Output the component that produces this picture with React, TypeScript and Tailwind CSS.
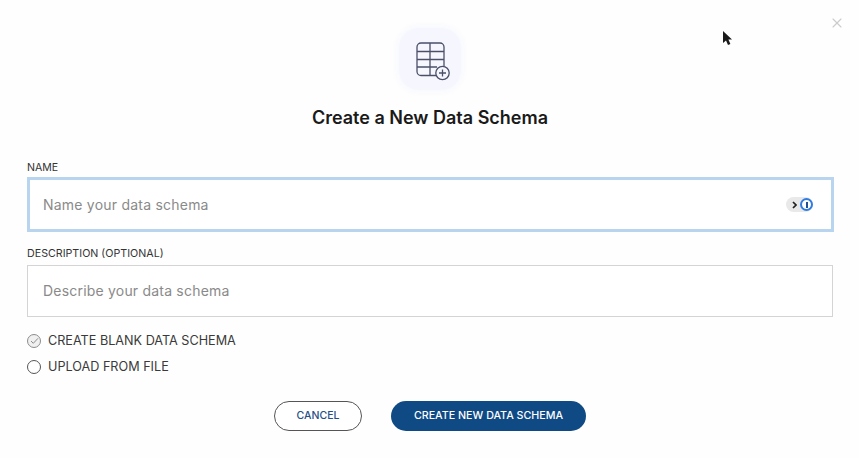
import { X } from "lucide-react";

function SchemaIcon() {
  return (
    <svg width="36" height="40" viewBox="0 0 36 40" fill="none" stroke="#4b5068" strokeWidth="1.3">
      <path d="M21 33.5H6a4 4 0 0 1-4-4V5a4 4 0 0 1 4-4h19a4 4 0 0 1 4 4v19" />
      <path d="M2 9.5h27M2 17.5h27M2 25h20M15 1v32.5" />
      <circle cx="27.5" cy="31" r="6.7" />
      <path d="M27.5 27.5v7M24 31h7" />
    </svg>
  );
}

function PasswordBadge() {
  return (
    <div className="flex h-[15px] w-[27px] items-center justify-between rounded-full bg-[#e9e9e9] pl-[6px]">
      <svg width="5" height="8" viewBox="0 0 5 8" fill="none" stroke="#222222" strokeWidth="1.7">
        <path d="M1 1l3 3-3 3" />
      </svg>
      <div className="flex h-[13px] w-[13px] items-center justify-center rounded-full border-2 border-[#2f7de1] bg-white">
        <div className="h-[6px] w-[2px] bg-[#1f4f96]" />
      </div>
    </div>
  );
}

export default function App() {
  return (
    <div className="flex h-[458px] w-[859px] flex-col overflow-hidden bg-[#fefefe] font-['Inter','Liberation_Sans',sans-serif] text-[#2b2b2b]">
      <div className="relative flex h-[160px] flex-col items-center">
        <div className="mt-[28px] flex h-[62px] w-[62px] items-start justify-start rounded-[20px] bg-[#f6f7fe] pl-[16px] pt-[14px] shadow-[0_0_6px_3px_#f8f9fe]">
          <SchemaIcon />
        </div>
        <h1 className="mt-[17px] pl-[1px] text-[18px] font-semibold leading-[22px] text-[#1a1a1a]">Create a New Data Schema</h1>
        <X className="absolute left-[829px] top-[15px] h-[16px] w-[16px] text-[#cccccc]" strokeWidth={1.7} />
        {/* mouse pointer from the recording */}
        <svg className="absolute left-[722px] top-[30px]" width="11" height="17" viewBox="0 0 11 17" fill="#1a1a1a">
          <path d="M1 1v12l3-2.6L6 15l2.4-1-2-4.5H10z" />
        </svg>
      </div>

      <div className="flex flex-col px-[27px]">
        <label className="text-[10.6px] leading-[16px] text-[#333333]">NAME</label>
        <div className="mt-[1px] flex h-[55px] w-[807px] items-center justify-between border-[3px] border-[#b8d4ef] bg-white pl-[13px] pr-[18px]">
          <span className="text-[14px] tracking-[0.22px] text-[#8a8a8a]">Name your data schema</span>
          <PasswordBadge />
        </div>

        <label className="mt-[14px] text-[10.7px] leading-[16px] text-[#333333]">DESCRIPTION (OPTIONAL)</label>
        <div className="mt-[3px] flex h-[52px] w-[806px] items-center border border-[#d4d4d4] bg-white pb-[1px] pl-[15px]">
          <span className="text-[14px] tracking-[0.2px] text-[#8a8a8a]">Describe your data schema</span>
        </div>

        <div className="mt-[15px] flex items-center gap-[7px]">
          <div className="flex h-[14px] w-[14px] items-center justify-center rounded-full border border-[#8c8c8c] bg-[#f0f0f0]">
            <svg width="9" height="8" viewBox="0 0 9 8" fill="none" stroke="#8c8c8c" strokeWidth="1">
              <path d="M1 4l2.3 2.3L8 1.3" />
            </svg>
          </div>
          <span className="text-[12.65px] leading-[18px] text-[#3a3a3a]">CREATE BLANK DATA SCHEMA</span>
        </div>
        <div className="mt-[8px] flex items-center gap-[7px]">
          <div className="h-[14px] w-[14px] rounded-full border border-[#555555] bg-white" />
          <span className="text-[12.65px] leading-[18px] text-[#3a3a3a]">UPLOAD FROM FILE</span>
        </div>

        <div className="mt-[25px] flex justify-center gap-[29px] pl-[1px]">
          <button className="h-[30px] w-[88px] rounded-full border border-[#555555] bg-white text-[10.5px] font-medium text-[#1f4f85]">CANCEL</button>
          <button className="h-[30px] w-[195px] rounded-full bg-[#0f4a85] text-[10.7px] font-medium text-white">CREATE NEW DATA SCHEMA</button>
        </div>
      </div>
    </div>
  );
}
